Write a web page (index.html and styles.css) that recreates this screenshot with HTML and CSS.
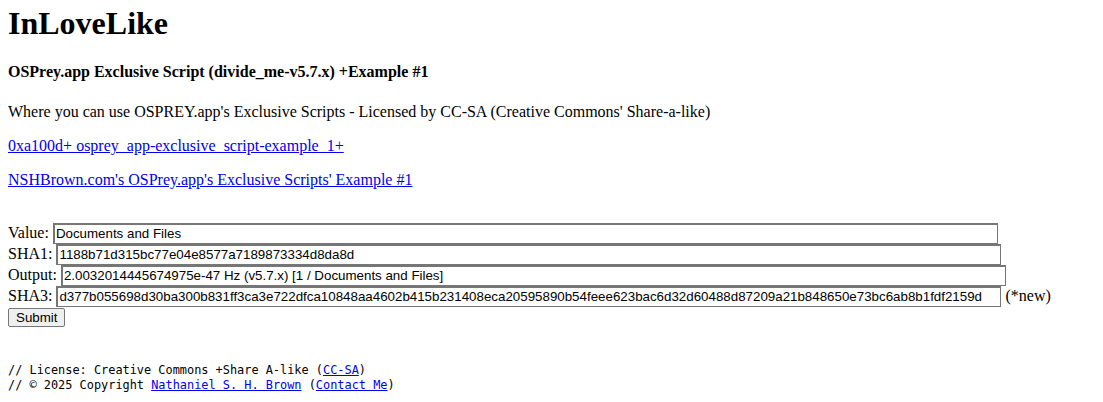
FILE: index.html
```
<!DOCTYPE html>
<html>
<head>
<meta charset="utf-8">
<title>InLoveLike</title>
<link rel="stylesheet" href="styles.css">
</head>
<body class="page">
<h1 class="title">InLoveLike</h1>
<h4 class="subtitle">OSPrey.app Exclusive Script (divide_me-v5.7.x) +Example #1</h4>
<p class="text">Where you can use OSPREY.app's Exclusive Scripts - Licensed by CC-SA (Creative Commons' Share-a-like)</p>
<p class="text"><a class="link" href="#">0xa100d+ osprey_app-exclusive_script-example_1+</a></p>
<p class="text"><a class="link" href="#">NSHBrown.com's OSPrey.app's Exclusive Scripts' Example #1</a></p>
<form class="form">
Value: <input class="field" type="text" value="Documents and Files"><br>
SHA1: <input class="field" type="text" value="1188b71d315bc77e04e8577a7189873334d8da8d"><br>
Output: <input class="field" type="text" value="2.0032014445674975e-47 Hz (v5.7.x) [1 / Documents and Files]"><br>
SHA3: <input class="field" type="text" value="d377b055698d30ba300b831ff3ca3e722dfca10848aa4602b415b231408eca20595890b54feee623bac6d32d60488d87209a21b848650e73bc6ab8b1fdf2159d"> (*new)<br>
<button class="submit" type="button">Submit</button>
</form>
<div class="footer">// License: Creative Commons +Share A-like (<a class="link" href="#">CC-SA</a>)<br>// © 2025 Copyright <a class="link" href="#">Nathaniel S. H. Brown</a> (<a class="link" href="#">Contact Me</a>)</div>
</body>
</html>
```
FILE: styles.css
```
html {
  background: #fff;
}
.page {
  margin: 5px 8px 8px;
  font-family: "Liberation Serif", "Times New Roman", serif;
  font-size: 16px;
  color: #000;
}
.title {
  font-size: 32px;
  font-weight: bold;
  margin: 0 0 21.44px;
}
.subtitle {
  font-size: 16px;
  font-weight: bold;
  margin: 21.28px 0;
}
.text {
  margin: 16px 0;
}
.link {
  color: #0000ee;
  text-decoration: underline;
}
.form {
  margin: 34px 0 0;
}
.field {
  font-family: "Liberation Sans", Arial, sans-serif;
  font-size: 13.333px;
  width: 945px;
  box-sizing: border-box;
  padding: 1px 2px;
  border: 1px solid #767676;
  height: 21px;
  margin: 0;
  color: #000;
  background: #fff;
  box-shadow: inset 1px 1px 0 #767676;
}
.submit {
  font-family: "Liberation Sans", Arial, sans-serif;
  font-size: 13.333px;
  padding: 1px 7px;
  border: 1px solid #767676;
  border-radius: 2px;
  background: #efefef;
  color: #000;
  height: 19px;
  margin: 1px 0 0;
  line-height: 15px;
}
.footer {
  margin-top: 36px;
  font-family: "DejaVu Sans Mono", "Liberation Mono", monospace;
  font-size: 11.9px;
  line-height: 15px;
}
```
